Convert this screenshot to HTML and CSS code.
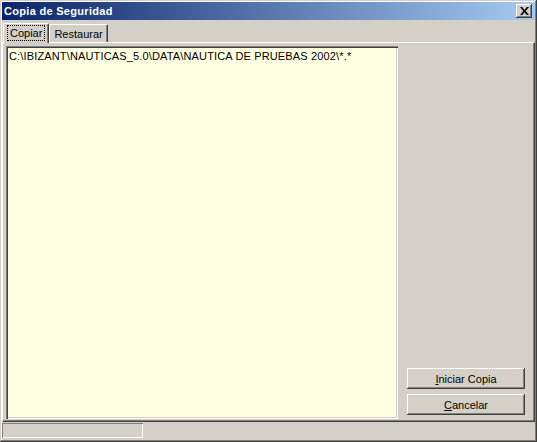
FILE: index.html
```html
<!DOCTYPE html>
<html lang="es">
<head>
    <meta charset="UTF-8">
    <title>Copia de Seguridad</title>
    <link rel="stylesheet" href="styles.css">
</head>
<body>
    <div class="window">
        <!-- barra de titulo -->
        <div class="title-bar">
            <span class="title-text">Copia de Seguridad</span>
            <button class="close-btn" aria-label="Cerrar">
                <svg width="8" height="7" viewBox="0 0 8 7">
                    <path d="M0 0h2l2 2.5L6 0h2L5 3.5 8 7H6L4 4.5 2 7H0l3-3.5z" fill="#000"/>
                </svg>
            </button>
        </div>

        <!-- pestañas -->
        <div class="tabs">
            <div class="tab active"><span class="focus">Copiar</span></div>
            <div class="tab">Restaurar</div>
        </div>

        <div class="panel">
            <div class="file-list">
                <div class="file-item">C:\IBIZANT\NAUTICAS_5.0\DATA\NAUTICA DE PRUEBAS 2002\*.*</div>
            </div>
            <div class="side">
                <button class="btn"><u>I</u>niciar Copia</button>
                <button class="btn"><u>C</u>ancelar</button>
            </div>
        </div>

        <div class="status-bar">
            <div class="status-pane"></div>
        </div>
    </div>
</body>
</html>
```

FILE: styles.css
```css
html, body {
    margin: 0;
    padding: 0;
    background-color: #d4d0c8;
}
body {
    font-family: 'Liberation Sans', Arial, sans-serif;
    font-size: 11px;
    color: #000;
}
.window {
    width: 537px;
    height: 442px;
    box-sizing: border-box;
    padding: 2px;
    background-color: #d4d0c8;
    display: flex;
    flex-direction: column;
    /* marco 3D clasico */
    box-shadow: inset -1px -1px #404040, inset 1px 1px #d4d0c8,
                inset -2px -2px #808080, inset 2px 2px #ffffff;
}
.title-bar {
    height: 18px;
    display: flex;
    align-items: center;
    justify-content: space-between;
    padding: 0 3px 0 2px;
    background: linear-gradient(to right, #0a246a, #a6caf0);
    flex: 0 0 auto;
}
.title-text {
    color: #fff;
    font-weight: bold;
    font-size: 11px;
    letter-spacing: 0.3px;
}
.close-btn {
    width: 16px;
    height: 14px;
    padding: 0;
    border: none;
    background-color: #d4d0c8;
    display: flex;
    align-items: center;
    justify-content: center;
    box-shadow: inset -1px -1px #404040, inset 1px 1px #ffffff,
                inset -2px -2px #808080, inset 2px 2px #d4d0c8;
}
.close-btn svg {
    width: 9px;
    height: 8px;
}
.tabs {
    display: flex;
    align-items: flex-end;
    height: 20px;
    margin-top: 2px;
    padding-left: 1px;
    flex: 0 0 auto;
}
.tab {
    height: 18px;
    box-sizing: border-box;
    padding: 2px 4px 0 4px;
    border-top: 1px solid #fff;
    border-left: 1px solid #fff;
    border-right: 1px solid #404040;
    border-radius: 2px 2px 0 0;
    box-shadow: inset -1px 0 #808080;
    line-height: 14px;
}
.tab.active {
    height: 20px;
    padding: 2px 4px 0 4px;
    margin-right: 0;
    position: relative;
    z-index: 1;
    background-color: #d4d0c8;
    margin-bottom: -1px;
}
.focus {
    display: inline-block;
    padding: 0 2px;
    outline: 1px dotted #000;
    line-height: 14px;
}
.panel {
    flex: 1 1 auto;
    display: flex;
    padding: 3px 9px 2px 3px;
    border-top: 1px solid #fff;
    border-left: 1px solid #fff;
    border-right: 1px solid #404040;
    border-bottom: 1px solid #404040;
    box-shadow: inset -1px -1px #808080;
}
.file-list {
    width: 392px;
    box-sizing: border-box;
    background-color: #ffffe1;
    padding: 4px 3px;
    box-shadow: inset 1px 1px #808080, inset 2px 2px #404040,
                inset -1px -1px #ffffff, inset -2px -2px #d4d0c8;
}
.file-item {
    white-space: nowrap;
    line-height: 13px;
    letter-spacing: 0.15px;
}
.side {
    flex: 1;
    display: flex;
    flex-direction: column;
    justify-content: flex-end;
    align-items: flex-end;
    gap: 5px;
    padding-bottom: 4px;
}
.btn {
    width: 118px;
    height: 21px;
    border: none;
    background-color: #d4d0c8;
    font-family: inherit;
    font-size: 11px;
    padding: 0;
    box-shadow: inset -1px -1px #404040, inset 1px 1px #ffffff,
                inset -2px -2px #808080, inset 2px 2px #d4d0c8;
}
.status-bar {
    height: 17px;
    flex: 0 0 auto;
    padding-top: 1px;
    display: flex;
}
.status-pane {
    width: 141px;
    height: 15px;
    box-shadow: inset 1px 1px #808080, inset -1px -1px #ffffff;
}
```
